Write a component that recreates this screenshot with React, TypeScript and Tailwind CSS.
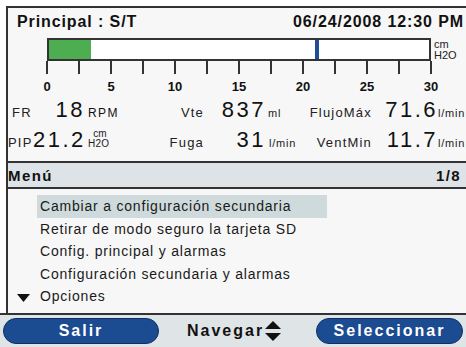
import React from "react";

const ticks = Array.from({ length: 13 }, (_, i) => i);
const labels = ["0", "5", "10", "15", "20", "25", "30"];
const items = [
  "Cambiar a configuración secundaria",
  "Retirar de modo seguro la tarjeta SD",
  "Config. principal y alarmas",
  "Configuración secundaria y alarmas",
  "Opciones",
];

function Big({ children }: { children: React.ReactNode }) {
  return <span className="text-[22px] leading-none tracking-[2.5px] text-[#111]">{children}</span>;
}
function Lbl({ children }: { children: React.ReactNode }) {
  return <span className="text-[13px] leading-none tracking-[1.2px] text-[#222]">{children}</span>;
}
function Unit({ children }: { children: React.ReactNode }) {
  return <span className="text-[11px] leading-none tracking-[0.8px] text-[#222]">{children}</span>;
}

export default function App() {
  return (
    <div className="w-[466px] h-[347px] bg-white flex flex-col overflow-hidden font-['Liberation_Sans',Arial,sans-serif] text-[#111]">
      <div className="mt-[6px] ml-[6px] h-[307px] border-l-2 border-t-2 border-[#333] bg-[#f7f7f7] flex flex-col">
        {/* Title */}
        <div className="h-[28px] flex items-center justify-between pr-[2px] pl-[9px] text-[16px] font-bold tracking-[0.9px] leading-none">
          <span>Principal : S/T</span>
          <span>06/24/2008 12:30 PM</span>
        </div>
        {/* Gauge */}
        <div className="mt-[2px] flex items-start">
          <div className="ml-[39px] w-[384px] h-[23px] border-2 border-[#333] bg-white relative">
            <div className="absolute left-0 top-0 bottom-0 w-[42px] bg-[#4cae50]" />
            <div className="absolute left-[266px] top-0 bottom-0 w-[4px] bg-[#1d4f98]" />
          </div>
          <div className="ml-[3px] flex flex-col text-[11px] leading-[11px] text-[#222] pt-[1px]">
            <span>cm</span>
            <span>H2O</span>
          </div>
        </div>
        <div className="ml-[38px] w-[386px] h-[13px] flex justify-between">
          {ticks.map((t) => (
            <div key={t} className="w-[2px] h-full bg-[#333]" />
          ))}
        </div>
        <div className="mt-[6px] ml-[29px] w-[404px] h-[14px] flex justify-between">
          {labels.map((l) => (
            <div key={l} className="w-[20px] text-center text-[13px] font-bold leading-[14px]">
              {l}
            </div>
          ))}
        </div>
        {/* Metrics row 1 */}
        <div className="h-[30px] pt-[5px] flex items-baseline">
          <div className="w-[25px] pl-[4px]"><Lbl>FR</Lbl></div>
          <div className="w-[52px] text-right"><Big>18</Big></div>
          <div className="w-[65px] pl-[3px]"><span className="text-[12px] leading-none tracking-[1.4px]">RPM</span></div>
          <div className="w-[54px] text-right"><Lbl>Vte</Lbl></div>
          <div className="w-[62px] text-right"><Big>837</Big></div>
          <div className="w-[40px] pl-[2px]"><Unit>ml</Unit></div>
          <div className="w-[66px] text-right"><Lbl>FlujoMáx</Lbl></div>
          <div className="w-[66px] text-right"><Big>71.6</Big></div>
          <div className="whitespace-nowrap"><Unit>l/min</Unit></div>
        </div>
        {/* Metrics row 2 */}
        <div className="h-[37px] pt-[5px] flex items-baseline">
          <div className="w-[25px]"><Lbl>PIP</Lbl></div>
          <div className="w-[52px] text-right"><Big>21.2</Big></div>
          <div className="w-[65px] pl-[3px]">
            <span className="inline-block text-[10px] leading-[10px] tracking-[0.2px] text-[#222]">
              <span className="block text-center w-[24px]">cm</span>
              <span className="block">H2O</span>
            </span>
          </div>
          <div className="w-[54px] text-right"><Lbl>Fuga</Lbl></div>
          <div className="w-[62px] text-right"><Big>31</Big></div>
          <div className="w-[40px] pl-[3px]"><Unit>l/min</Unit></div>
          <div className="w-[66px] text-right"><Lbl>VentMin</Lbl></div>
          <div className="w-[66px] text-right"><Big>11.7</Big></div>
          <div className="whitespace-nowrap"><Unit>l/min</Unit></div>
        </div>
        {/* Menu header */}
        <div className="h-[28px] border-y-2 border-[#333] bg-[#dde3e7] flex items-center justify-between pr-[5px] text-[15px] font-bold tracking-[1.4px] leading-none">
          <span>Menú</span>
          <span>1/8</span>
        </div>
        {/* List */}
        <div className="flex-1 pt-[6px] flex flex-col">
          {items.map((it, i) => (
            <div key={it} className="h-[22.5px] flex items-center relative">
              {i === 4 && (
                <svg className="absolute left-[9px] top-[9px]" width="13" height="8" viewBox="0 0 13 8">
                  <polygon points="0,0 13,0 6.5,8" fill="#111" />
                </svg>
              )}
              <div
                className={`ml-[29px] w-[290px] h-full flex items-center pl-[3px] text-[14px] tracking-[0.8px] leading-none text-[#1a1a1a] ${
                  i === 0 ? "bg-[#cfdadd]" : ""
                }`}
              >
                {it}
              </div>
            </div>
          ))}
        </div>
      </div>
      <div className="h-[2px] bg-[#333]" />
      {/* Bottom bar */}
      <div className="h-[32px] bg-[#dfe4e7] flex items-center">
        <div className="ml-[3px] w-[156px] h-[26px] rounded-full bg-[#1b4b90] border border-[#0f2f60] flex items-center justify-center text-white text-[16px] font-bold tracking-[2px] leading-none">
          Salir
        </div>
        <div className="ml-[28px] flex items-center text-[16px] font-bold tracking-[2px] leading-none text-[#111]">
          <span>Navegar</span>
          <svg width="18" height="22" viewBox="0 0 18 22">
            <polygon points="9,1 17,9 1,9" fill="#111" />
            <polygon points="1,13 17,13 9,21" fill="#111" />
          </svg>
        </div>
        <div className="ml-auto mr-[3px] w-[147px] h-[26px] rounded-full bg-[#1b4b90] border border-[#0f2f60] flex items-center justify-center text-white text-[16px] font-bold tracking-[2px] leading-none">
          Seleccionar
        </div>
      </div>
    </div>
  );
}
